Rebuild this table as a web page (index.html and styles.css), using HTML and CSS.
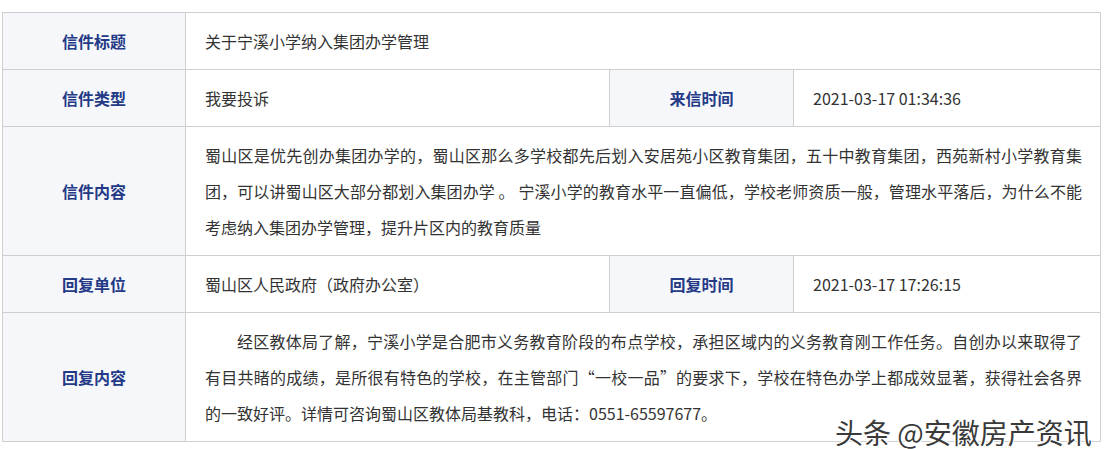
FILE: index.html
```html
<!DOCTYPE html>
<html lang="zh-CN">
<head>
<meta charset="utf-8">
<title>信件详情</title>
<link rel="stylesheet" href="styles.css">
</head>
<body>
<div class="page">
  <table class="letter">
    <colgroup>
      <col class="c-label">
      <col class="c-value">
      <col class="c-label2">
      <col class="c-value2">
    </colgroup>
    <tr class="short">
      <th>信件标题</th>
      <td colspan="3">关于宁溪小学纳入集团办学管理</td>
    </tr>
    <tr class="short">
      <th>信件类型</th>
      <td>我要投诉</td>
      <th>来信时间</th>
      <td>2021-03-17 01:34:36</td>
    </tr>
    <tr class="tall">
      <th>信件内容</th>
      <td colspan="3" class="text">蜀山区是优先创办集团办学的，蜀山区那么多学校都先后划入安居苑小区教育集团，五十中教育集团，西苑新村小学教育集团，可以讲蜀山区大部分都划入集团办学 。 宁溪小学的教育水平一直偏低，学校老师资质一般，管理水平落后，为什么不能考虑纳入集团办学管理，提升片区内的教育质量</td>
    </tr>
    <tr class="short">
      <th>回复单位</th>
      <td>蜀山区人民政府（政府办公室）</td>
      <th>回复时间</th>
      <td>2021-03-17 17:26:15</td>
    </tr>
    <tr class="tall">
      <th>回复内容</th>
      <td colspan="3" class="text indent">经区教体局了解，宁溪小学是合肥市义务教育阶段的布点学校，承担区域内的义务教育刚工作任务。自创办以来取得了有目共睹的成绩，是所很有特色的学校，在主管部门“一校一品”的要求下，学校在特色办学上都成效显著，获得社会各界的一致好评。详情可咨询蜀山区教体局基教科，电话：0551-65597677。</td>
    </tr>
  </table>
  <div class="watermark">头条 @安徽房产资讯</div>
</div>
</body>
</html>
```

FILE: styles.css
```css
* { box-sizing: border-box; }
html, body {
  margin: 0;
  padding: 0;
  background: #fff;
}
body {
  font-family: "Noto Sans CJK SC", "Noto Sans", sans-serif;
  font-size: 16px;
  color: #333;
}
.page {
  position: relative;
  width: 1108px;
  height: 449px;
  padding: 12px 0 0 2px;
  overflow: hidden;
}
.letter {
  width: 1098px;
  table-layout: fixed;
  border-collapse: collapse;
  border: 1px solid #cfcfcf;
}
.c-label { width: 183px; }
.c-value { width: 424px; }
.c-label2 { width: 184px; }
.c-value2 { width: 307px; }
.letter th,
.letter td {
  border: 1px solid #cfcfcf;
  vertical-align: middle;
  line-height: 36px;
}
.letter th {
  background: #f6f7fb;
  color: #243a86;
  font-weight: bold;
  text-align: center;
  padding: 0;
}
.letter td {
  padding: 0 18px 0 19px;
  text-align: left;
}
.short th, .short td { height: 57px; }
.tall th, .tall td { height: 129px; }
.letter td.text {
  text-align: justify;
  padding: 10px 18px 10px 19px;
}
.letter td.indent { text-indent: 2em; }
.watermark {
  position: absolute;
  left: 835px;
  top: 418px;
  font-size: 28px;
  line-height: 28px;
  color: #3a3a3a;
  white-space: nowrap;
  text-shadow: 1px 1px 0 #fff, -1px -1px 0 #fff, 1px -1px 0 #fff, -1px 1px 0 #fff;
}
```
